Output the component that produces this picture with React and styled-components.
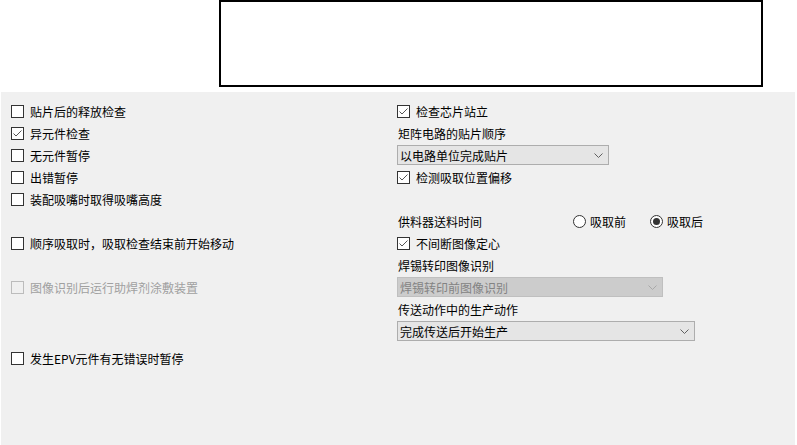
import React from 'react';
import styled, { createGlobalStyle, css } from 'styled-components';

const GlobalStyle = createGlobalStyle`
  html, body {
    margin: 0;
    padding: 0;
    background: #ffffff;
  }
  body {
    font-family: "Noto Sans CJK SC", "Microsoft YaHei", sans-serif;
    font-size: 12px;
    color: #000000;
  }
`;

const StyledTop = styled.div`
  height: 92px;
  display: flex;
  align-items: flex-start;
  padding-left: 219px;
  box-sizing: border-box;
`;

const StyledPreview = styled.div`
  width: 544px;
  height: 87px;
  border: 2px solid #000000;
  box-sizing: border-box;
  background: #ffffff;
`;

const StyledPanel = styled.div`
  height: 353px;
  margin: 0 2px 0 1px;
  background: #f0f0f0;
  padding: 8px 0 0 10px;
  box-sizing: border-box;
  display: grid;
  grid-template-columns: 386px 1fr;
  align-items: start;
`;

const StyledColumn = styled.div`
  display: flex;
  flex-direction: column;
`;

const StyledRow = styled.div`
  height: 22px;
  display: flex;
  align-items: center;
  gap: 5px;
  white-space: nowrap;
  margin-top: ${(p) => p.$gap || 0}px;
  color: ${(p) => (p.$disabled ? '#a0a0a0' : '#000000')};
`;

const StyledBox = styled.span`
  width: 13px;
  height: 13px;
  box-sizing: border-box;
  border: 1px solid ${(p) => (p.$disabled ? '#bcbcbc' : '#333333')};
  background: ${(p) => (p.$disabled ? '#f0f0f0' : '#ffffff')};
  display: flex;
  align-items: center;
  justify-content: center;
  flex: none;

  svg {
    display: block;
  }
`;

const StyledLabel = styled.span`
  padding-left: 1px;
`;

const StyledFieldLabel = styled.span`
  width: 170px;
  padding-left: 1px;
`;

const StyledRadioGroup = styled.div`
  display: flex;
  align-items: center;
  gap: 24px;
`;

const StyledRadio = styled.label`
  display: flex;
  align-items: center;
  gap: 4px;
`;

const StyledCircle = styled.span`
  width: 13px;
  height: 13px;
  box-sizing: border-box;
  border-radius: 50%;
  border: 1px solid #333333;
  background: #ffffff;
  display: flex;
  align-items: center;
  justify-content: center;
  flex: none;

  &::after {
    content: '';
    width: 7px;
    height: 7px;
    border-radius: 50%;
    background: ${(p) => (p.$on ? '#333333' : 'transparent')};
  }
`;

const StyledSelect = styled.div`
  width: ${(p) => p.$width}px;
  height: 20px;
  box-sizing: border-box;
  border: 1px solid #adadad;
  background: #e5e5e5;
  display: flex;
  align-items: center;
  justify-content: space-between;
  padding: 0 5px 0 2px;
  color: #000000;

  ${(p) =>
    p.$disabled &&
    css`
      border-color: #bfbfbf;
      background: #cccccc;
      color: #838383;
    `}
`;

const Check = ({ checked, disabled, children, gap }) => (
  <StyledRow $gap={gap} $disabled={disabled}>
    <StyledBox $disabled={disabled}>
      {checked && (
        <svg width="11" height="11" viewBox="0 0 11 11">
          <polyline points="1.5,5.5 4,8 9.5,2.5" fill="none" stroke="#555555" strokeWidth="1" />
        </svg>
      )}
    </StyledBox>
    <StyledLabel>{children}</StyledLabel>
  </StyledRow>
);

const Chevron = ({ color }) => (
  <svg width="9" height="5" viewBox="0 0 9 5">
    <polyline points="0.5,0.5 4.5,4.5 8.5,0.5" fill="none" stroke={color} strokeWidth="1" />
  </svg>
);

const Select = ({ width, disabled, children }) => (
  <StyledRow>
    <StyledSelect $width={width} $disabled={disabled}>
      <span>{children}</span>
      <Chevron color={disabled ? '#a8a8a8' : '#606060'} />
    </StyledSelect>
  </StyledRow>
);

const App = () => (
  <>
    <GlobalStyle />
    <StyledTop>
      <StyledPreview />
    </StyledTop>
    <StyledPanel>
      <StyledColumn>
        <Check>贴片后的释放检查</Check>
        <Check checked>异元件检查</Check>
        <Check>无元件暂停</Check>
        <Check>出错暂停</Check>
        <Check>装配吸嘴时取得吸嘴高度</Check>
        <Check gap={22}>顺序吸取时，吸取检查结束前开始移动</Check>
        <Check gap={22} disabled>
          图像识别后运行助焊剂涂敷装置
        </Check>
        <Check gap={49}>发生EPV元件有无错误时暂停</Check>
      </StyledColumn>
      <StyledColumn>
        <Check checked>检查芯片站立</Check>
        <StyledRow>
          <StyledLabel>矩阵电路的贴片顺序</StyledLabel>
        </StyledRow>
        <Select width={212}>以电路单位完成贴片</Select>
        <Check checked>检测吸取位置偏移</Check>
        <StyledRow $gap={22}>
          <StyledFieldLabel>供料器送料时间</StyledFieldLabel>
          <StyledRadioGroup>
            <StyledRadio>
              <StyledCircle />
              <span>吸取前</span>
            </StyledRadio>
            <StyledRadio>
              <StyledCircle $on />
              <span>吸取后</span>
            </StyledRadio>
          </StyledRadioGroup>
        </StyledRow>
        <Check checked>不间断图像定心</Check>
        <StyledRow>
          <StyledLabel>焊锡转印图像识别</StyledLabel>
        </StyledRow>
        <Select width={266} disabled>
          焊锡转印前图像识别
        </Select>
        <StyledRow>
          <StyledLabel>传送动作中的生产动作</StyledLabel>
        </StyledRow>
        <Select width={298}>完成传送后开始生产</Select>
      </StyledColumn>
    </StyledPanel>
  </>
);

export default App;
